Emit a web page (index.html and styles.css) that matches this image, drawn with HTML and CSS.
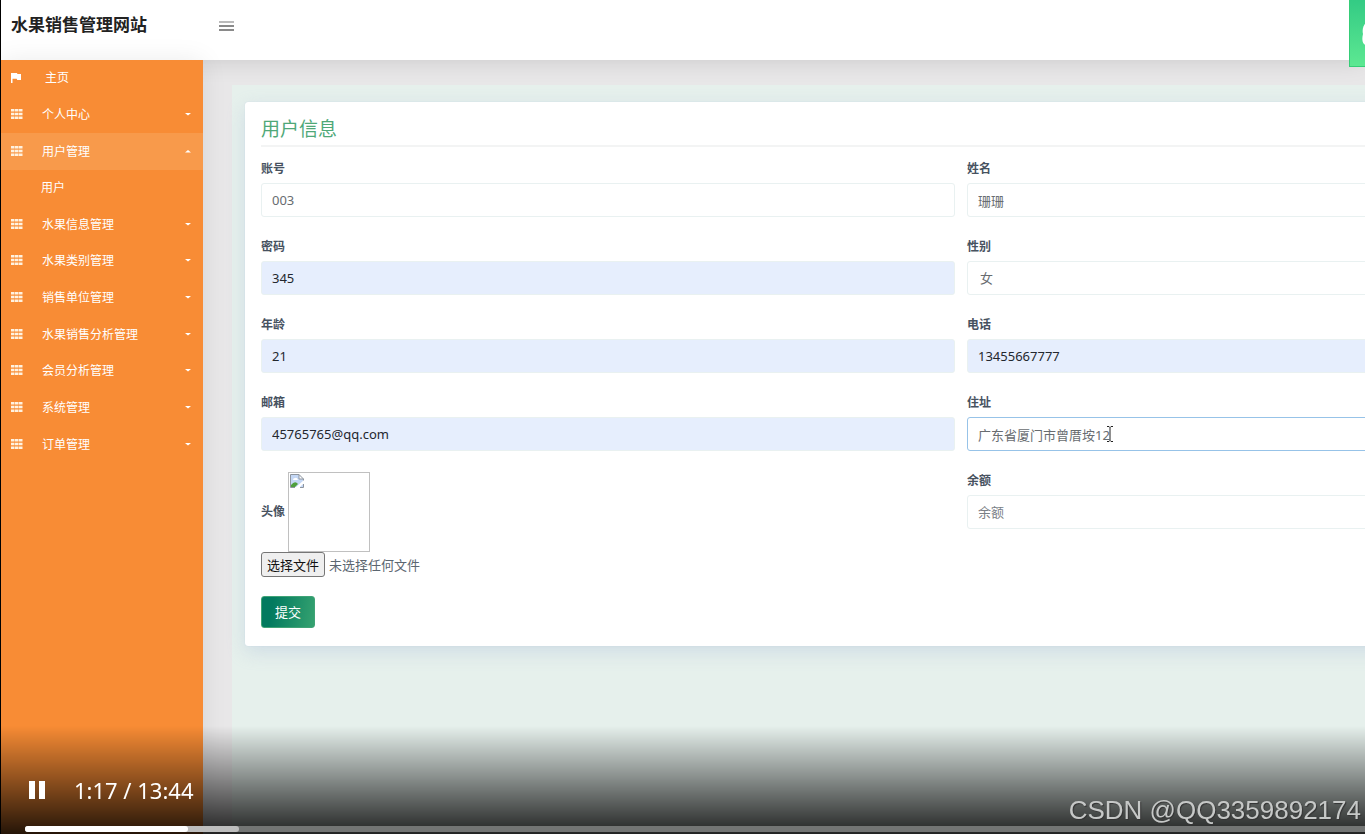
FILE: index.html
```html
<!DOCTYPE html>
<html lang="zh-CN">
<head>
<meta charset="utf-8">
<title>水果销售管理网站</title>
<link rel="stylesheet" href="styles.css">
</head>
<body>
<svg class="sprite" aria-hidden="true">
  <symbol id="grid" viewBox="0 0 12 10"><path d="M0 0h3.500v2.400H0zM4 0h3.500v2.400H4zM8 0h3.500v2.400H8zM0 3.800h3.500v2.400H0zM4 3.800h3.500v2.400H4zM8 3.800h3.500v2.400H8zM0 7.600h3.500V10H0zM4 7.600h3.500V10H4zM8 7.600h3.500V10H8z"/></symbol>
  <symbol id="flag" viewBox="0 0 12 12"><path d="M0 1h6l.4 1H10v6H6.2l-.5-1.200H1.500V11H0z"/></symbol>
  <symbol id="down" viewBox="0 0 6 3"><path d="M0 0h6L3 2.500z"/></symbol>
  <symbol id="up" viewBox="0 0 6 3"><path d="M0 2.500h6L3 0z"/></symbol>
</svg>
<div class="app">
  <header class="topbar">
    <h1 class="brand">水果销售管理网站</h1>
    <button class="toggle" type="button" aria-label="菜单"><span></span><span></span><span></span></button>
  </header>
  <div class="body">
    <nav class="sidebar">
      <ul class="menu">
        <li><a class="home" href="#"><svg class="icon flag"><use href="#flag"/></svg><span>主页</span></a></li>
        <li><a href="#"><svg class="icon"><use href="#grid"/></svg><span>个人中心</span><svg class="caret"><use href="#down"/></svg></a></li>
        <li><a class="active" href="#"><svg class="icon"><use href="#grid"/></svg><span>用户管理</span><svg class="caret"><use href="#up"/></svg></a></li>
        <li><a class="sub" href="#"><span>用户</span></a></li>
        <li><a href="#"><svg class="icon"><use href="#grid"/></svg><span>水果信息管理</span><svg class="caret"><use href="#down"/></svg></a></li>
        <li><a href="#"><svg class="icon"><use href="#grid"/></svg><span>水果类别管理</span><svg class="caret"><use href="#down"/></svg></a></li>
        <li><a href="#"><svg class="icon"><use href="#grid"/></svg><span>销售单位管理</span><svg class="caret"><use href="#down"/></svg></a></li>
        <li><a href="#"><svg class="icon"><use href="#grid"/></svg><span>水果销售分析管理</span><svg class="caret"><use href="#down"/></svg></a></li>
        <li><a href="#"><svg class="icon"><use href="#grid"/></svg><span>会员分析管理</span><svg class="caret"><use href="#down"/></svg></a></li>
        <li><a href="#"><svg class="icon"><use href="#grid"/></svg><span>系统管理</span><svg class="caret"><use href="#down"/></svg></a></li>
        <li><a href="#"><svg class="icon"><use href="#grid"/></svg><span>订单管理</span><svg class="caret"><use href="#down"/></svg></a></li>
      </ul>
    </nav>
    <main class="content">
      <div class="panel">
        <form class="card">
          <h2 class="title">用户信息</h2>
          <div class="fields">
            <div class="field"><label for="account">账号</label><input id="account" type="text" value="003"></div>
            <div class="field"><label for="name">姓名</label><input id="name" type="text" value="珊珊"></div>
            <div class="field"><label for="pwd">密码</label><input id="pwd" class="filled" type="text" value="345"></div>
            <div class="field"><label for="sex">性别</label><select id="sex"><option>女</option><option>男</option></select></div>
            <div class="field"><label for="age">年龄</label><input id="age" class="filled" type="text" value="21"></div>
            <div class="field"><label for="phone">电话</label><input id="phone" class="filled" type="text" value="13455667777"></div>
            <div class="field"><label for="mail">邮箱</label><input id="mail" class="filled" type="text" value="45765765@qq.com"></div>
            <div class="field address"><label for="addr">住址</label><input id="addr" class="focused" type="text" value="广东省厦门市曾厝垵12">
              <svg class="cursor" viewBox="0 0 8 16" aria-hidden="true"><path d="M1 .5h2l1 1 1-1h2M4 1.500v13M1 15.500h2l1-1 1 1h2"/></svg></div>
            <div class="upload">
              <div class="avatar"><label for="file">头像</label>
                <span class="photo"><svg viewBox="0 0 14 14" aria-hidden="true"><path fill="#c4d7f5" d="M1 1h8l4 4v8H1z"/><path fill="#fff" d="M3 6q0-2 2-2 2-1 3 2zM9 1v4h4z"/><path fill="#4f9f3e" d="M1 13v-2q4-5 7-1l-3 3z"/><path fill="#fff" d="M5 14l9-8v3l-5 5z"/><path fill="none" stroke="#8e959e" d="M5 13.500H.5V.5H9L13.500 5v1.500M9 .5V5h4.500M13.500 10v3.500H10"/></svg></span></div>
              <div class="picker"><button class="choose" type="button">选择文件</button><span>未选择任何文件</span><input id="file" type="file" hidden></div>
            </div>
            <div class="field"><label for="balance">余额</label><input id="balance" type="text" placeholder="余额"></div>
          </div>
          <button class="submit" type="submit">提交</button>
        </form>
      </div>
    </main>
  </div>
</div>
<div class="badge" aria-hidden="true"><svg viewBox="0 0 16 66"><path d="M17 22c-4 3-5 8-4 12-1 4-1 8 1 10 1 1 3 2 4 2V35c-2 0-3 1-3 3 0-5 0-9 3-11z"/></svg></div>
<div class="player">
  <div class="controls">
    <button class="pause" type="button" aria-label="暂停"><span></span><span></span></button>
    <span class="time">1:17 / 13:44</span>
    <span class="watermark">CSDN @QQ3359892174</span>
  </div>
  <div class="track"><div class="buffered" style="width:16%"></div><div class="played" style="width:12.200%"></div></div>
</div>
</body>
</html>
```
FILE: styles.css
```css
* { box-sizing: border-box; }
body {
  margin: 0;
  overflow: hidden;
  background: #e8e7e8;
  color: #5b6670;
  font: 13px/18px "Noto Sans", "Noto Sans CJK SC", sans-serif;
}
h1, h2, ul { margin: 0; padding: 0; }
button, input, select { font: inherit; }
a { color: inherit; text-decoration: none; }
.sprite { display: none; }
.app {
  display: flex;
  flex-direction: column;
  height: 100vh;
  border-left: 1px solid #000;
}
.topbar {
  z-index: 1;
  display: flex;
  flex: none;
  align-items: flex-start;
  gap: 72px;
  height: 60px;
  padding: 12px 10px;
  background: #fff;
  box-shadow: 0 0 24px rgba(0, 0, 0, .14);
}
.brand { color: #222; font-size: 17px; line-height: 26px; font-weight: 700; }
.toggle {
  display: flex;
  flex-direction: column;
  gap: 2px;
  padding: 9px 0;
  border: 0;
  background: none;
}
.toggle span { width: 15px; height: 2px; background: #8a8a8a; }
.toggle span:first-child { background: #bbb; }
.body { display: flex; flex: 1; min-height: 0; }
.sidebar {
  z-index: 2;
  flex: none;
  width: 202px;
  background: #f88c35;
  color: #fff;
  box-shadow: 0 0 24px rgba(0, 0, 0, .08);
}
.menu {
  display: grid;
  grid-auto-rows: 1fr;
  height: 403px;
  list-style: none;
  font-size: 12px;
}
.menu a {
  display: flex;
  align-items: center;
  height: 100%;
  padding: 0 12px 0 10px;
}
.menu .active { background: #f89a4b; }
.icon { width: 12px; height: 10px; margin: 0 19px 2px 0; fill: #fff2e0; }
.flag { width: 12px; height: 12px; margin: 0 22px 0 0; fill: #fff; }
.menu .sub { padding-left: 40px; }
.caret { width: 6px; height: 3px; margin: 0 0 1px auto; fill: #fff; }
.content { flex: 1; min-width: 0; padding: 25px 0 0 29px; overflow: hidden; }
.panel {
  height: 100%;
  margin-right: -325px;
  padding: 17px 13px;
  background: #e6f0ec;
}
.card {
  padding: 16px 16px 18px;
  border-radius: 3px;
  background: #fff;
  box-shadow: 0 0 1px #b8cbdc, 0 6px 18px rgba(160, 180, 215, .32);
}
.title {
  margin-bottom: 13px;
  padding-bottom: 5px;
  border-bottom: 2px solid #f3f4f4;
  color: #4fa878;
  font-size: 19px;
  line-height: 22px;
  font-weight: 400;
}
.fields { display: grid; grid-template-columns: 1fr 1fr; align-items: start; gap: 21px 12px; }
.field { display: flex; flex-direction: column; gap: 5px; }
label { color: #47525f; font-size: 12px; font-weight: 600; }
.field input, .field select {
  width: 100%;
  height: 34px;
  padding: 0 10px;
  border: 1px solid #e9f1f1;
  border-radius: 3px;
  outline: 0;
  background: #fff;
  color: #686c70;
}
.field select { padding-left: 12px; appearance: none; }
.field input.filled { background: #e6eefd; color: #23272e; }
.field input.focused { border-color: #97c3e8; }
::placeholder { color: #7a8086; opacity: 1; }
.address { position: relative; }
.cursor {
  position: absolute;
  left: 139px;
  bottom: 9px;
  width: 8px;
  height: 16px;
  fill: none;
  stroke: #222;
}
.avatar { display: flex; align-items: center; gap: 3px; }
.photo { width: 82px; height: 80px; padding: 1px; border: 1px solid #c0c0c0; }
.photo svg { display: block; width: 14px; height: 14px; }
.picker { display: flex; align-items: center; gap: 4px; }
.choose {
  height: 25px;
  padding: 0 5px;
  border: 1px solid #767676;
  border-radius: 3px;
  background: #efefef;
  color: #111;
  line-height: 18px;
}
.submit {
  display: block;
  height: 32px;
  margin-top: 19px;
  padding: 0 13px;
  border: 1px solid #3fa376;
  border-radius: 3px;
  background: linear-gradient(100deg, #027a5f 20%, #35a270);
  color: #fff;
}
.badge {
  position: fixed;
  z-index: 3;
  top: 0;
  right: 0;
  width: 16px;
  height: 67px;
  border: solid #35cd77;
  border-width: 0 0 1px 1px;
  background: linear-gradient(#33cb84, #5de892);
}
.badge svg { display: block; width: 16px; height: 66px; fill: #fff; }
.player {
  position: fixed;
  z-index: 4;
  right: 0;
  bottom: 0;
  left: 0;
  padding: 28px 0 2px;
  background: linear-gradient(transparent, rgba(0, 0, 0, .85));
}
.controls { display: flex; align-items: center; height: 72px; padding: 0 4px 0 29px; color: #fff; }
.pause { display: flex; gap: 4px; padding: 0; border: 0; background: none; }
.pause span { width: 6px; height: 18px; background: #fff; }
.time { margin-left: 29px; font-size: 22px; line-height: 30px; }
.watermark {
  align-self: flex-end;
  margin-left: auto;
  color: #c6c8c7;
  font: 26px/32px "Liberation Sans", sans-serif;
  text-shadow: 1px 1px 1px #333;
}
.track {
  position: relative;
  height: 6px;
  margin-left: 25px;
  border-radius: 3px 0 0 3px;
  background: #737574;
}
.buffered, .played { position: absolute; inset: 0 auto 0 0; border-radius: 3px; background: #bdbdbd; }
.played { background: #fff; }
```
